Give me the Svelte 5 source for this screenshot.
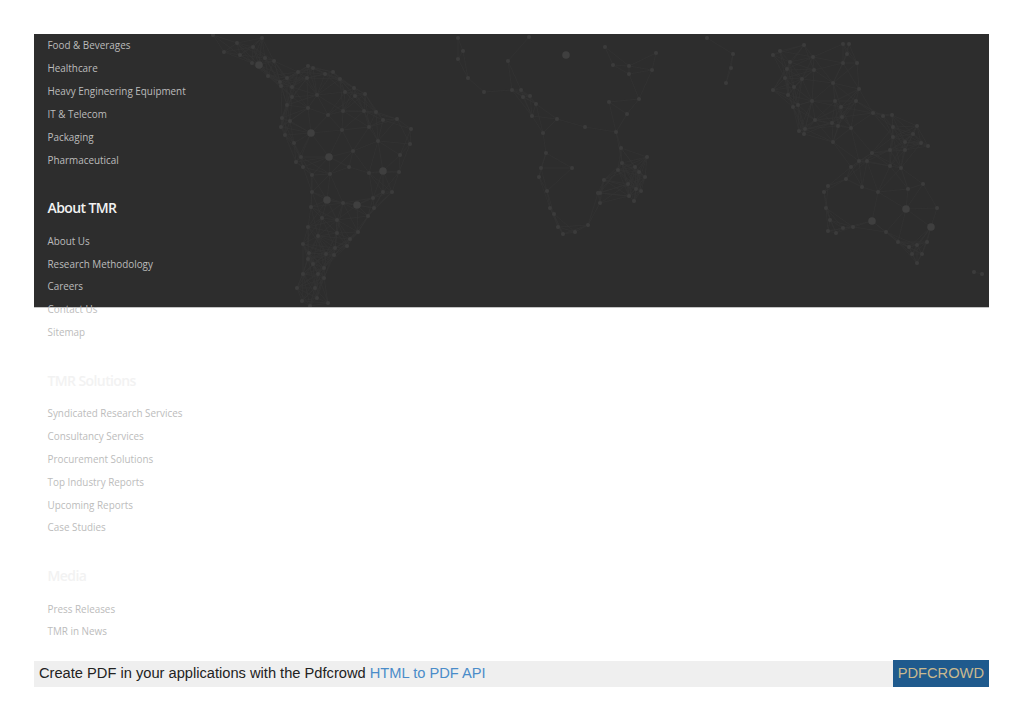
<script>
  const sections = [
    { items: ['Food & Beverages', 'Healthcare', 'Heavy Engineering Equipment', 'IT & Telecom', 'Packaging', 'Pharmaceutical'] },
    { title: 'About TMR', items: ['About Us', 'Research Methodology', 'Careers', 'Contact Us', 'Sitemap'] },
    { title: 'TMR Solutions', items: ['Syndicated Research Services', 'Consultancy Services', 'Procurement Solutions', 'Top Industry Reports', 'Upcoming Reports', 'Case Studies'] },
    { title: 'Media', items: ['Press Releases', 'TMR in News'] }
  ];

  // world map dots, page coordinates minus the panel offset further down
  const small = '213,35 237,43 262,38 224,52 240,55 253,47 265,58 274,61 252,63 268,76 280,82 287,78 308,66 313,68 298,72 307,78 325,74 333,72 340,79 292,87 281,86 354,88 345,92 365,94 355,96 317,95 292,97 287,105 308,108 343,111 364,111 376,112 328,115 282,118 290,121 383,120 397,119 281,127 411,129 369,127 342,130 285,135 378,141 410,144 294,143 353,151 400,155 301,157 296,162 303,167 349,167 399,172 369,173 312,175 330,174 312,192 383,192 392,192 373,198 343,203 311,207 374,208 368,216 322,218 337,220 308,227 358,232 337,233 318,236 350,239 347,246 303,244 335,248 309,253 326,254 334,255 308,259 313,264 324,268 303,274 318,274 324,278 297,288 315,288 317,298 302,301 328,303 310,306 458,38 463,51 458,59 508,61 529,37 468,78 484,92 512,90 521,90 523,97 530,96 536,104 532,116 557,119 585,127 543,133 546,153 541,168 572,168 539,177 547,191 550,208 554,214 558,227 563,234 575,232 588,225 598,193 605,47 613,65 629,66 629,74 656,53 652,70 639,99 609,102 627,114 616,132 621,148 647,157 622,163 618,170 635,167 639,172 645,177 604,180 628,184 636,189 641,191 600,193 629,196 634,201 600,203 707,38 733,54 731,68 726,83 773,55 780,51 790,62 813,57 804,45 787,69 814,70 785,78 802,79 843,44 849,44 847,54 843,63 857,63 859,89 833,83 773,90 794,87 788,95 798,105 793,107 812,101 835,101 841,107 856,101 842,117 815,120 832,123 838,126 851,128 799,131 805,129 804,134 833,142 873,113 883,116 892,115 893,127 917,126 913,134 893,137 905,142 921,143 928,146 905,150 890,150 872,153 867,161 859,161 851,167 890,166 901,168 846,179 828,186 862,187 824,192 878,192 923,184 908,189 937,208 826,208 830,220 853,227 843,228 836,233 828,231 886,232 898,242 917,245 909,247 927,242 912,254 922,254 917,263 982,274 974,272';
  const big = '259,65 311,133 329,157 383,171 327,200 357,205 566,55 906,209 872,221 931,227';

  const parse = (s) => s.split(' ').map((p) => p.split(',').map(Number)).map(([x, y]) => ({ x: x - 34, y: y - 34 }));
  const dots = parse(small);
  const hubs = parse(big);
  const all = [...dots, ...hubs];

  // thin links between neighbouring dots
  const links = [];
  all.forEach((a, i) => {
    all.slice(i + 1).forEach((b) => {
      if (Math.hypot(a.x - b.x, a.y - b.y) < 34) links.push([a, b]);
    });
  });
</script>

<div class="page">
  <div class="sheet">
    <div class="backdrop">
      <svg width="955" height="273" viewBox="0 0 955 273" aria-hidden="true">
        {#each links as [a, b]}
          <line x1={a.x} y1={a.y} x2={b.x} y2={b.y} stroke="#333" stroke-width="0.7" />
        {/each}
        {#each dots as d}
          <circle cx={d.x} cy={d.y} r="2.1" fill="#3b3b3b" />
        {/each}
        {#each hubs as d}
          <circle cx={d.x} cy={d.y} r="3.8" fill="#3f3f3f" />
        {/each}
      </svg>
    </div>

    <div class="links">
      {#each sections as section}
        <section>
          {#if section.title}<h4>{section.title}</h4>{/if}
          <ul>
            {#each section.items as item}
              <li>{item}</li>
            {/each}
          </ul>
        </section>
      {/each}
    </div>
  </div>

  <div class="pdfbar">
    <span class="pitch">Create PDF in your applications with the Pdfcrowd <span class="api">HTML to PDF API</span></span>
    <span class="brand">PDFCROWD</span>
  </div>
</div>

<style>
  :global(body) {
    background: #fff;
  }

  .page {
    padding: 34px 34px 0;
  }

  .sheet {
    position: relative;
  }

  .backdrop {
    position: absolute;
    top: 0;
    left: 0;
    right: 0;
    height: 273px;
    background: #2d2d2d;
    border-bottom: 1px solid #c4c4c4;
    overflow: hidden;
  }

  .backdrop svg {
    display: block;
    filter: blur(0.6px);
  }

  .links {
    position: relative;
    padding-top: 0.4px;
    padding-left: 13.5px;
    font-family: "Open Sans", sans-serif;
    font-size: 9.9px;
    color: #bcbcbc;
    height: 617.6px;
  }

  section + section {
    margin-top: 15px;
  }

  h4 {
    margin: 0;
    height: 43.4px;
    line-height: 43.4px;
    font-size: 14px;
    font-weight: 600;
    letter-spacing: -0.6px;
    color: #f2f2f2;
  }

  ul {
    margin: 0;
    padding: 0;
    list-style: none;
  }

  li {
    height: 22.84px;
    line-height: 22.84px;
  }

  .pdfbar {
    display: flex;
    justify-content: space-between;
    align-items: center;
    height: 26px;
    margin-top: 9px;
    padding-left: 5px;
    background: #efefef;
    font-family: "Liberation Sans", Arial, sans-serif;
    font-size: 14.67px;
    color: #222;
  }

  .pitch {
    padding-bottom: 2px;
  }

  .api {
    color: #4a8cc9;
  }

  .brand {
    align-self: flex-end;
    height: 27px;
    line-height: 27px;
    padding: 0 5px;
    background: #1f5a8d;
    color: #c9b98f;
  }
</style>
